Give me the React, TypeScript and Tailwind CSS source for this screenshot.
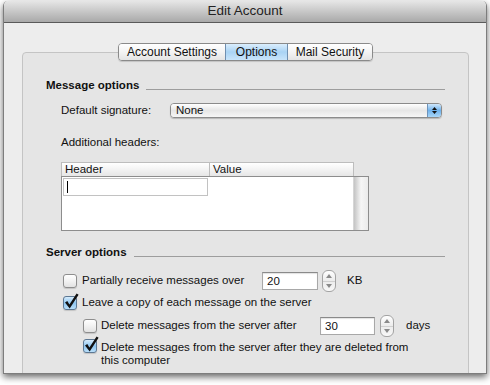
import React from "react";

function Checkbox({ on }: { on?: boolean }) {
  return (
    <span
      className={
        "relative block w-[14px] h-[14px] shrink-0 rounded-[3px] border shadow-[0_1px_1px_rgba(0,0,0,0.15)] " +
        (on
          ? "border-[#5d7893] bg-gradient-to-b from-[#d6ecfc] via-[#8ec6f1] to-[#b8def9]"
          : "border-[#8e8e8e] bg-gradient-to-b from-[#ffffff] via-[#f2f2f2] to-[#e2e2e2]")
      }
    >
      {on && (
        <svg
          className="absolute left-[-1px] top-[-4px] overflow-visible"
          width="17"
          height="17"
          viewBox="0 -3 17 17"
        >
          <path d="M2 6.4 L4.3 5.1 L6.4 8.6 L13.6 -2.6 L15.6 -1.3 L6.7 12.4 Z" fill="#111" />
        </svg>
      )}
    </span>
  );
}

function Stepper() {
  return (
    <span className="flex flex-col w-[14px] h-[22px] shrink-0 rounded-[6px] border border-[#a3a3a3] bg-gradient-to-b from-[#ffffff] via-[#ececec] to-[#f8f8f8] overflow-hidden">
      <span className="flex-1 flex items-center justify-center border-b border-[#d0d0d0]">
        <svg width="6" height="4" viewBox="0 0 6 4">
          <path d="M0 4 L3 0 L6 4 Z" fill="#8a8a8a" />
        </svg>
      </span>
      <span className="flex-1 flex items-center justify-center">
        <svg width="6" height="4" viewBox="0 0 6 4">
          <path d="M0 0 L3 4 L6 0 Z" fill="#8a8a8a" />
        </svg>
      </span>
    </span>
  );
}

function NumberField({ value, width }: { value: string; width: string }) {
  return (
    <span
      className={
        width +
        " h-[18px] shrink-0 bg-white border border-[#a8a8a8] border-t-[#8a8a8a] pl-[4px] leading-[16px] shadow-[inset_0_1px_1px_rgba(0,0,0,0.12)]"
      }
    >
      {value}
    </span>
  );
}

function Section({ title }: { title: string }) {
  return (
    <div className="flex items-center h-[14px]">
      <span className="font-bold">{title}</span>
      <span className="flex-1 h-px bg-[#9d9d9d] ml-[7px] mt-[6px]" />
    </div>
  );
}

export default function App() {
  return (
    <div className="w-[490px] h-[385px] bg-white overflow-hidden font-['Liberation_Sans',Arial,sans-serif] text-[11.5px] text-[#111]">
      <div className="ml-[3px] mt-[1px] w-[484px] h-[373px] flex flex-col rounded-t-[5px] border-x border-b border-[#7d7d7d] shadow-[0_3px_7px_rgba(0,0,0,0.6)] overflow-hidden">
        {/* title bar */}
        <div className="h-[22px] shrink-0 flex items-center justify-center bg-gradient-to-b from-[#e6e6e6] to-[#a9a9a9] border-b border-[#5a5a5a] text-[13.5px] text-[#222]">
          Edit Account
        </div>

        <div className="flex-1 min-h-0 bg-[#ededed] pl-[18px] pr-[17px] pt-[20px] flex flex-col">
          {/* tabs */}
          <div className="relative z-10 flex justify-center h-[18px] shrink-0 text-[12px]">
            <div className="flex h-[18px] rounded-[4px] border border-[#8a8a8a] overflow-hidden shadow-[0_1px_1px_rgba(0,0,0,0.15)]">
              <span className="w-[106px] flex items-center justify-center bg-gradient-to-b from-[#ffffff] via-[#f4f4f4] to-[#e4e4e4]">
                Account Settings
              </span>
              <span className="w-[63px] flex items-center justify-center border-x border-[#6f8fb0] bg-gradient-to-b from-[#dbeefd] via-[#a9d3f4] to-[#c9e5fb]">
                Options
              </span>
              <span className="w-[84px] flex items-center justify-center bg-gradient-to-b from-[#ffffff] via-[#f4f4f4] to-[#e4e4e4]">
                Mail Security
              </span>
            </div>
          </div>

          {/* group box */}
          <div className="-mt-[9px] h-[340px] shrink-0 rounded-[4px] border border-[#c4c4c4] bg-[#e5e5e5] pt-[26px] pl-[23px] pr-[23px]">
            <Section title="Message options" />

            <div className="pl-[15px]">
              <div className="mt-[10px] flex items-center h-[15px]">
                <span className="w-[109px] shrink-0">Default signature:</span>
                <div className="w-[272px] h-[15px] flex rounded-[4px] border border-[#8b8b8b] overflow-hidden shadow-[0_1px_1px_rgba(0,0,0,0.2)]">
                  <span className="flex-1 pl-[5px] leading-[13px] bg-gradient-to-b from-[#ffffff] via-[#e6e6e6] to-[#f6f6f6]">
                    None
                  </span>
                  <span className="w-[14px] flex flex-col items-center justify-center gap-[1px] border-l border-[#6d93bb] bg-gradient-to-b from-[#cfe7fb] via-[#6fb2ec] to-[#a8d6f8]">
                    <svg width="5" height="3" viewBox="0 0 5 3">
                      <path d="M0 3 L2.5 0 L5 3 Z" fill="#111" />
                    </svg>
                    <svg width="5" height="3" viewBox="0 0 5 3">
                      <path d="M0 0 L2.5 3 L5 0 Z" fill="#111" />
                    </svg>
                  </span>
                </div>
              </div>

              <div className="mt-[18px] h-[14px] flex items-center">Additional headers:</div>

              {/* headers table */}
              <div className="mt-[12px] w-[308px]">
                <div className="w-[293px] h-[14px] flex border-t border-x border-[#bdbdbd] bg-gradient-to-b from-[#ffffff] via-[#f3f3f3] to-[#e6e6e6] leading-[13px]">
                  <span className="w-[148px] pl-[3px] border-r border-[#bdbdbd]">Header</span>
                  <span className="flex-1 pl-[3px]">Value</span>
                </div>
                <div className="h-[55px] flex border border-[#8d8d8d] bg-white">
                  <div className="flex-1 p-[1px]">
                    <div className="w-[145px] h-[18px] border border-[#c2c2c2] flex items-center">
                      <span className="ml-[3px] w-px h-[12px] bg-black" />
                    </div>
                  </div>
                  <div className="w-[15px] bg-gradient-to-r from-[#c4c4c4] via-[#f6f6f6] to-[#ebebeb] border-l border-[#d6d6d6]" />
                </div>
              </div>
            </div>

            <div className="mt-[15px]">
              <Section title="Server options" />
            </div>

            <div className="pl-[15px]">
              <div className="mt-[10px] h-[22px] flex items-center">
                <span className="ml-[2px] mr-[5px]">
                  <Checkbox />
                </span>
                <span className="w-[180px] shrink-0">Partially receive messages over</span>
                <NumberField value="20" width="w-[56px]" />
                <span className="ml-[4px]">
                  <Stepper />
                </span>
                <span className="ml-[11px]">KB</span>
              </div>

              <div className="mt-[3px] h-[16px] flex items-center">
                <span className="ml-[2px] mr-[5px]">
                  <Checkbox on />
                </span>
                <span>Leave a copy of each message on the server</span>
              </div>

              <div className="mt-[4px] h-[22px] flex items-center">
                <span className="ml-[22px] mr-[4px]">
                  <Checkbox />
                </span>
                <span className="w-[219px] shrink-0">Delete messages from the server after</span>
                <NumberField value="30" width="w-[55px]" />
                <span className="ml-[5px]">
                  <Stepper />
                </span>
                <span className="ml-[12px]">days</span>
              </div>

              <div className="mt-[2px] flex items-start">
                <span className="ml-[22px] mr-[4px]">
                  <Checkbox on />
                </span>
                <span className="pt-[2px] leading-[13px]">
                  Delete messages from the server after they are deleted from
                  <br />
                  this computer
                </span>
              </div>
            </div>
          </div>
        </div>
      </div>
    </div>
  );
}
